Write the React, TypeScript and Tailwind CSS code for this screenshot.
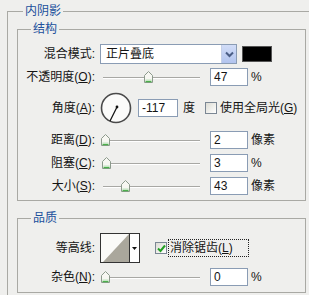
import React from "react"

const font = "font-['Liberation_Sans','Noto_Sans_CJK_SC',sans-serif]"

function Label({ text, k }: { text: string; k?: string }) {
	return (
		<div className="w-[77px] shrink-0 text-right whitespace-nowrap">
			{text}
			{k && (
				<>
					(<span className="underline underline-offset-1">{k}</span>)
				</>
			)}
			:
		</div>
	)
}

function Thumb() {
	return (
		<svg width="9" height="12" viewBox="0 0 9 12">
			<path d="M0.5 4.5 L4.5 0.5 L8.5 4.5 V11.5 H0.5 Z" fill="#f7f7f2" stroke="#8c9a8c" />
			<path d="M1.5 10.5 H7.5" stroke="#4caf4c" strokeWidth="1.5" />
			<path d="M1.5 9 H7.5" stroke="#bfe3bf" />
		</svg>
	)
}

function Slider({ pos }: { pos: number }) {
	return (
		<div className="relative w-[100px] h-[12px] shrink-0">
			<div className="absolute left-[3px] right-0 top-[6px] h-[2px] border-t border-b border-t-[#a8a8a4] border-b-white" />
			<div className="absolute top-0" style={{ left: pos }}>
				<Thumb />
			</div>
		</div>
	)
}

function NumBox({ value, w = "w-[38px]" }: { value: string; w?: string }) {
	return (
		<div className={`${w} h-[18px] shrink-0 bg-white border border-[#8a9cb4] pl-[3px] flex items-center text-[12px]`}>
			{value}
		</div>
	)
}

function CheckBox({ checked }: { checked?: boolean }) {
	return (
		<div className="w-[12px] h-[12px] shrink-0 border border-[#7b8794] bg-gradient-to-br from-[#dcdcd4] to-white flex items-center justify-center">
			{checked && (
				<svg width="9" height="9" viewBox="0 0 9 9">
					<path d="M1 4.5 L3.5 7 L8 1.5" fill="none" stroke="#23a023" strokeWidth="2" />
				</svg>
			)}
		</div>
	)
}

function SliderRow({ label, k, pos, value, unit, h }: { label: string; k: string; pos: number; value: string; unit: string; h: string }) {
	return (
		<div className={`flex items-center ${h}`}>
			<Label text={label} k={k} />
			<div className="ml-[5px]">
				<Slider pos={pos} />
			</div>
			<div className="ml-[10px]">
				<NumBox value={value} />
			</div>
			<span className="ml-[3px]">{unit}</span>
		</div>
	)
}

export default function App() {
	return (
		<main className={`w-[309px] h-[295px] overflow-hidden bg-[#efefed] text-[12px] leading-[14px] text-[#141414] ${font} pl-[7px] pt-[4px]`}>
			<fieldset className="w-[320px] h-[320px] border-l border-t border-[#a9a9a4]">
				<legend className="ml-[15px] px-[2px] text-[#21509c]">内阴影</legend>

				<div className="pl-[9px] pt-[4px] flex flex-col">
					<fieldset className="w-[289px] border border-[#a9a9a4]">
						<legend className="ml-[13px] px-[2px] text-[#21509c]">结构</legend>

						<div className="flex flex-col pb-[1px]">
							<div className="flex items-center h-[20px] mt-[8px]">
								<Label text="混合模式" />
								<div className="ml-[5px] w-[137px] h-[20px] bg-white border border-[#8a9cb4] flex items-center justify-between">
									<span className="pl-[5px]">正片叠底</span>
									<div className="w-[15px] h-full bg-gradient-to-b from-[#d2ddf7] to-[#b2c4ee] border-l border-[#c5d0e8] flex items-center justify-center">
										<svg width="9" height="7" viewBox="0 0 9 7">
											<path d="M1 1.5 L4.5 5 L8 1.5" fill="none" stroke="#4b5e86" strokeWidth="2" />
										</svg>
									</div>
								</div>
								<div className="ml-[5px] w-[30px] h-[16px] bg-black border border-[#555]" />
							</div>

							<SliderRow label="不透明度" k="O" pos={44} value="47" unit="%" h="h-[24px] mt-[1px]" />

							<div className="flex items-center h-[38px]">
								<Label text="角度" k="A" />
								<svg className="ml-[5px] shrink-0" width="32" height="32" viewBox="0 0 32 32">
									<circle cx="16" cy="16" r="14.5" fill="#fbfbfa" stroke="#4a4a4a" strokeWidth="1.6" />
									<path d="M17 15 L10 29" stroke="#111" strokeWidth="1.3" />
									<circle cx="17" cy="15" r="1.4" fill="#111" />
								</svg>
								<div className="ml-[6px]">
									<NumBox value="-117" w="w-[40px]" />
								</div>
								<span className="ml-[5px]">度</span>
								<div className="ml-[10px]">
									<CheckBox />
								</div>
								<span className="ml-[3px] whitespace-nowrap">
									使用全局光(<span className="underline underline-offset-1">G</span>)
								</span>
							</div>

							<SliderRow label="距离" k="D" pos={1} value="2" unit="像素" h="h-[26px]" />
							<SliderRow label="阻塞" k="C" pos={2} value="3" unit="%" h="h-[20px]" />
							<SliderRow label="大小" k="S" pos={21} value="43" unit="像素" h="h-[26px]" />
						</div>
					</fieldset>

					<fieldset className="w-[289px] border border-[#a9a9a4] mt-[10px]">
						<legend className="ml-[13px] px-[2px] text-[#21509c]">品质</legend>

						<div className="flex flex-col pb-[1px]">
							<div className="flex items-center h-[30px] mt-[8px]">
								<Label text="等高线" />
								<div className="ml-[5px] flex h-[30px] border border-[#333]">
									<svg width="28" height="28" viewBox="0 0 28 28" className="block">
										<rect width="28" height="28" fill="#fafaf8" />
										<path d="M2 28 L28 0 V28 Z" fill="#aaa79c" />
									</svg>
									<div className="w-[10px] h-full bg-white border-l border-[#333] flex items-center justify-center">
										<svg width="5" height="3" viewBox="0 0 5 3">
											<path d="M0 0 H5 L2.5 3 Z" fill="#111" />
										</svg>
									</div>
								</div>
								<div className="ml-[15px]">
									<CheckBox checked />
								</div>
								<div className="ml-[1px] h-[18px] w-[81px] border border-dotted border-[#222] flex items-center pl-[1px] whitespace-nowrap">
									消除锯齿(<span className="underline underline-offset-1">L</span>)
								</div>
							</div>

							<SliderRow label="杂色" k="N" pos={1} value="0" unit="%" h="h-[28px]" />
						</div>
					</fieldset>
				</div>
			</fieldset>
		</main>
	)
}
